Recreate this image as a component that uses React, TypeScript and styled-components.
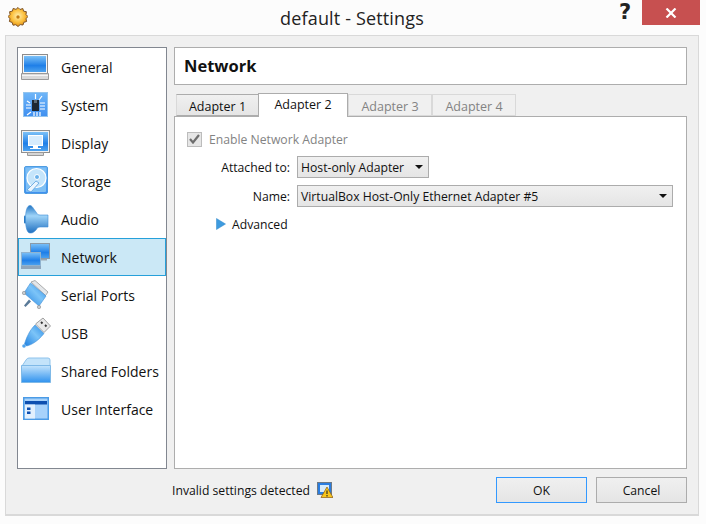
import React from "react";
import styled, { createGlobalStyle } from "styled-components";

const Global = createGlobalStyle`
  html, body { margin: 0; padding: 0; background: #fcfcfc; }
  body { font-family: "Open Sans", "Noto Sans", "Liberation Sans", sans-serif; font-size: 14px; color: #111; }
`;

const Window = styled.div`
  width: 706px; height: 524px; box-sizing: border-box; display: flex; flex-direction: column; overflow: hidden; background: #fcfcfc;
`;
const TitleBar = styled.header`
  height: 35px; flex: none; display: flex; align-items: flex-start; position: relative; box-sizing: border-box; padding-left: 8px;
`;
const AppIcon = styled.svg`
  width: 20px; height: 20px; margin-top: 7px; flex: none;
`;
const Title = styled.div`
  position: absolute; left: 0; right: 0; top: 6px; text-align: center; font-size: 18px; line-height: 24px; color: #222; letter-spacing: 0.15px; padding-right: 2px;
`;
const Help = styled.div`
  margin-left: auto; width: 20px; margin-top: 0; font: bold 21px/24px "DejaVu Sans", sans-serif; color: #222; text-align: center;
`;
const Close = styled.div`
  width: 58px; height: 25px; margin-left: 7px; margin-right: 6px; background: #c75050; display: flex; align-items: center; justify-content: center;
`;
const Body = styled.div`
  margin: 0 7px 0 5px; height: 481px; flex: none; box-sizing: border-box; background: #f0f0f0; border: 1px solid #d9d9d9; border-bottom: 2px solid #d9d9d9;
  padding: 11px 11px 0 11px; display: flex; flex-direction: column;
`;
const Main = styled.div`
  display: flex; gap: 7px; height: 422px; flex: none;
`;
const Sidebar = styled.nav`
  width: 150px; box-sizing: border-box; background: #fff; border: 1px solid #828790; flex: none;
  display: flex; flex-direction: column;
`;
const NavItem = styled.div<{ $active?: boolean }>`
  height: 38px; flex: none; box-sizing: border-box; display: flex; align-items: center; padding: 2px 0 0 3px; gap: 10px;
  background: ${p => (p.$active ? "#cbe8f6" : "transparent")};
  outline: ${p => (p.$active ? "1px solid #26a0da" : "none")};
  outline-offset: -1px;
  font-size: 14px; color: #111; line-height: 20px; white-space: nowrap;
`;
const NavIcon = styled.svg`
  width: 30px; height: 30px; flex: none; overflow: visible;
`;
const Content = styled.section`
  flex: 1; min-width: 0; display: flex; flex-direction: column;
`;
const Heading = styled.div`
  height: 38px; box-sizing: border-box; background: #fff; border: 1px solid #adadad; font-weight: 700; font-size: 16.5px; line-height: 36px; padding-left: 9px; color: #111; flex: none;
`;
const Tabs = styled.div`
  display: flex; height: 24px; margin-top: 7px; padding-left: 2px; position: relative; z-index: 1; align-items: flex-end; flex: none;
`;
const Tab = styled.div<{ $active?: boolean; $disabled?: boolean; $w: number }>`
  width: ${p => p.$w}px; box-sizing: border-box; text-align: center; font-size: 12.5px;
  height: ${p => (p.$active ? 24 : 22)}px;
  line-height: ${p => (p.$active ? 22 : 23)}px;
  margin-bottom: ${p => (p.$active ? -1 : 0)}px;
  background: ${p => (p.$active ? "#fff" : p.$disabled ? "#f0f0f0" : "linear-gradient(#f0f0f0,#e5e5e5)")};
  border: 1px solid ${p => (p.$disabled ? "#d9d9d9" : "#acacac")};
  border-bottom: ${p => (p.$active ? "none" : undefined)};
  border-left: ${p => (p.$active ? undefined : "1px solid #d9d9d9")};
  color: ${p => (p.$disabled ? "#838383" : "#111")};
  margin-left: ${p => (p.$active ? -1 : 0)}px;
`;
const Panel = styled.div`
  flex: 1; background: #fff; border: 1px solid #adadad; box-sizing: border-box; padding: 13px 13px 0 12px; display: flex; flex-direction: column;
`;
const CheckRow = styled.div`
  display: flex; align-items: center; gap: 7px; height: 18px; color: #838383; font-size: 12.2px;
`;
const CheckBox = styled.div`
  width: 15px; height: 15px; box-sizing: border-box; background: #e6e6e6; border: 1px solid #bcbcbc; display: flex; align-items: center; justify-content: center; flex: none;
`;
const FormRow = styled.div<{ $mt: number }>`
  display: flex; align-items: center; margin-top: ${p => p.$mt}px; height: 22px; gap: 7px;
`;
const Label = styled.div`
  width: 103px; text-align: right; font-size: 12.2px; flex: none; color: #111;
`;
const Select = styled.div<{ $w: number }>`
  width: ${p => p.$w}px; height: 22px; box-sizing: border-box; border: 1px solid #acacac; background: linear-gradient(#f0f0f0,#e5e5e5);
  display: flex; align-items: center; justify-content: space-between; padding: 0 5px 0 3px; font-size: 12.2px; color: #111; white-space: nowrap;
`;
const Arrow = styled.div`
  width: 0; height: 0; border-left: 4px solid transparent; border-right: 4px solid transparent; border-top: 4px solid #111;
`;
const AdvancedRow = styled.div`
  display: flex; align-items: center; margin-top: 6px; margin-left: 29px; height: 22px; gap: 6px; font-size: 12.2px; color: #111;
`;
const Footer = styled.footer`
  display: flex; align-items: center; height: 26px; margin-top: 8px; flex: none; padding-left: 155px;
`;
const Status = styled.div`
  font-size: 12.2px; color: #111; display: flex; align-items: center; gap: 7px; margin-right: auto; white-space: nowrap;
`;
const Button = styled.button<{ $primary?: boolean }>`
  width: 91px; height: 26px; box-sizing: border-box; margin-left: 9px; padding: 0; font: 12.2px "Open Sans", sans-serif; color: #111;
  border: 1px solid ${p => (p.$primary ? "#3399ff" : "#acacac")}; background: linear-gradient(#f0f0f0,#e5e5e5); border-radius: 0;
`;

const Defs = () => (
  <svg width="0" height="0" style={{ position: "absolute" }}>
    <defs>
      <linearGradient id="blue" x1="0" y1="0" x2="0" y2="1">
        <stop offset="0" stopColor="#7cc1f7" />
        <stop offset="0.6" stopColor="#1f7fe8" />
        <stop offset="1" stopColor="#4ea3ef" />
      </linearGradient>
      <linearGradient id="lite" x1="0" y1="0" x2="0" y2="1">
        <stop offset="0" stopColor="#c4e4fc" />
        <stop offset="1" stopColor="#2f92ee" />
      </linearGradient>
      <linearGradient id="sys" x1="0" y1="0" x2="0" y2="1">
        <stop offset="0" stopColor="#6fb6f8" />
        <stop offset="1" stopColor="#3f8ff0" />
      </linearGradient>
      <linearGradient id="diag" x1="0" y1="1" x2="1" y2="0">
        <stop offset="0" stopColor="#1f80e0" />
        <stop offset="0.55" stopColor="#7cc4f8" />
        <stop offset="1" stopColor="#2a8ce6" />
      </linearGradient>
      <linearGradient id="horn" x1="0" y1="0" x2="0" y2="1">
        <stop offset="0" stopColor="#2476c4" />
        <stop offset="0.38" stopColor="#9fd4f8" />
        <stop offset="1" stopColor="#1f6fc0" />
      </linearGradient>
      <radialGradient id="gold" cx="0.5" cy="0.45" r="0.6">
        <stop offset="0" stopColor="#fff0b0" />
        <stop offset="0.55" stopColor="#fbbf3c" />
        <stop offset="1" stopColor="#d9820c" />
      </radialGradient>
    </defs>
  </svg>
);

const icons: Record<string, React.ReactNode> = {
  General: (
    <>
      <rect x="1.5" y="1.5" width="25" height="19" fill="#f6f6f6" stroke="#8c8c8c" />
      <rect x="3" y="3" width="22" height="16" fill="url(#blue)" />
      <path d="M0.5 20.5 H27.5 V26.5 H0.5 Z" fill="#d9d9d9" stroke="#9a9a9a" />
      <path d="M1 22.5 H27" stroke="#f5f5f5" />
    </>
  ),
  System: (
    <>
      <rect x="2.5" y="1.5" width="24" height="24" fill="url(#sys)" stroke="#93c4ee" />
      <rect x="11" y="9" width="7" height="11" fill="#1d2731" />
      <rect x="13" y="9" width="3" height="3" fill="#5c6a74" />
      <path d="M14.5 3v5M21 5l-3 4M6 10l3 2M5 14h5M5 17h5M19 12h5M19 15h5M19 18h5M6 24l4-3M13 21v4M16 21v4M19 21v4" stroke="#fff" strokeWidth="1.2" />
    </>
  ),
  Display: (
    <>
      <rect x="0.5" y="1.5" width="28" height="22" fill="#f2f2f2" stroke="#8e8e8e" />
      <rect x="2" y="3" width="25" height="19" fill="url(#blue)" />
      <rect x="7.5" y="6.5" width="14" height="10" fill="#d7ecfd" stroke="#fff" />
      <path d="M12 17h5v2h-5z M9 19h11v1H9z" fill="#fff" />
      <path d="M6.5 23.5 H22.5 V26.5 H6.5 Z" fill="#d5d5d5" stroke="#9a9a9a" />
    </>
  ),
  Storage: (
    <>
      <rect x="3.5" y="-0.5" width="23" height="27" rx="1.5" fill="url(#sys)" stroke="#4f9de0" />
      <rect x="5" y="1" width="20" height="24" rx="1" fill="#7fc0f4" />
      <ellipse cx="15.5" cy="11" rx="9.5" ry="9.5" fill="#c5e5fb" stroke="#fff" strokeWidth="1.2" />
      <circle cx="16" cy="10" r="2.5" fill="#6ab1ea" stroke="#fff" />
      <path d="M6 23 L15 14 L18 16 L10 25 Z" fill="#eaf5fe" stroke="#5a9fdc" strokeWidth="0.8" />
    </>
  ),
  Audio: (
    <>
      <rect x="3" y="10.5" width="2" height="8" rx="1" fill="#2a7bc4" />
      <path d="M4.5 14 C4.5 6 6 0.5 9 0.5 C11 0.5 12 3 15 7 C16 9 17 10 19 10 H27 V22 H19 C17 22 16 23 15 25 C12 28 11 28 9 28 C6 28 4.5 22 4.5 14 Z" fill="url(#horn)" stroke="#3f8fd6" strokeWidth="0.6" />
    </>
  ),
  Network: (
    <>
      <rect x="9.5" y="0.5" width="19" height="15" fill="url(#blue)" stroke="#8a9aa8" />
      <path d="M18 16h8v1.5H18z" fill="#9aa6b0" />
      <rect x="0.5" y="9.5" width="19" height="13" fill="url(#blue)" stroke="#8fb3d0" />
      <path d="M0 23 H20 V26 H0Z" fill="#8fa6bb" />
    </>
  ),
  "Serial Ports": (
    <>
      <path d="M10 1 L14 -0.5 L27 11 L24.5 14.5 Z" fill="#e4e7ea" stroke="#8d8d8d" strokeWidth="0.7" />
      <path d="M3 24.5 L8 18.5 L10 20.5 L4.5 26 Z" fill="#5a7a98" />
      <path d="M9.5 2 L25 15 L18 25 L3 12 Z" fill="url(#diag)" stroke="#3f8fd6" strokeWidth="0.6" />
      <circle cx="3" cy="12" r="1.7" fill="#c8ccd0" stroke="#7d7d7d" strokeWidth="0.5" />
      <circle cx="18" cy="26" r="1.7" fill="#c8ccd0" stroke="#7d7d7d" strokeWidth="0.5" />
    </>
  ),
  USB: (
    <>
      <path d="M14 6 L23 14.5 C16 23 10 26 5.5 27 L3.5 25 C5 20 8 12 14 6 Z" fill="url(#diag)" stroke="#3f8fd6" strokeWidth="0.6" />
      <circle cx="3" cy="27" r="1.8" fill="#4fa3ec" />
      <path d="M14.5 5 L22 -1 L29.5 7 L23 13.5 Z" fill="#e8e8e8" stroke="#8a8a8a" strokeWidth="0.8" />
      <path d="M20 3l1.5 1.5M24 6l1.5 1.5" stroke="#333" strokeWidth="1.8" />
    </>
  ),
  "Shared Folders": (
    <>
      <path d="M5 3 Q6 1 8 1 H27 Q29 1 29 3 V25 H1 V9 Z" fill="#c3e3fa" stroke="#8ec3ec" />
      <path d="M0.5 8.5 H29.5 V25.5 H0.5 Z" fill="url(#lite)" stroke="#7fb9e7" />
    </>
  ),
  "User Interface": (
    <>
      <rect x="2.75" y="2.75" width="24.5" height="21.5" fill="#a7d2fb" stroke="#4b9be6" strokeWidth="1.5" />
      <rect x="4" y="6" width="22" height="3.5" fill="#0d4fb0" />
      <rect x="4" y="9.5" width="10" height="14" fill="#e2f0fd" />
      <rect x="6" y="12.5" width="3.5" height="2.5" fill="#0d4fb0" />
      <rect x="6" y="16.5" width="3.5" height="2.5" fill="#0d4fb0" />
    </>
  ),
};

const names = ["General", "System", "Display", "Storage", "Audio", "Network", "Serial Ports", "USB", "Shared Folders", "User Interface"];

export default function App() {
  return (
    <Window>
      <Global />
      <Defs />
      <TitleBar>
        <AppIcon viewBox="0 0 20 20">
          <path d="M10 .5l2 2 2.8-1 .8 2.7 2.8.5-.4 2.8 1.9 2-1.9 2.3.6 2.7-2.8.8-.8 2.7-2.8-.4-2.2 1.9-2.2-1.8-2.8.5-.9-2.8-2.7-.9.6-2.7-1.9-2.3 1.9-2-.4-2.8 2.8-.6.8-2.7 2.8 1z" fill="url(#gold)" stroke="#7d5428" strokeWidth="1" />
          <circle cx="10" cy="10" r="1.7" fill="#c07a12" />
        </AppIcon>
        <Title>default - Settings</Title>
        <Help>?</Help>
        <Close>
          <svg width="12" height="10" viewBox="0 0 12 10"><path d="M1.5 0.5 L10.5 9.5 M10.5 0.5 L1.5 9.5" stroke="#fff" strokeWidth="2.2" /></svg>
        </Close>
      </TitleBar>
      <Body>
        <Main>
          <Sidebar>
            {names.map(n => (
              <NavItem key={n} $active={n === "Network"}>
                <NavIcon viewBox="0 0 30 30">{icons[n]}</NavIcon>
                <span>{n}</span>
              </NavItem>
            ))}
          </Sidebar>
          <Content>
            <Heading>Network</Heading>
            <Tabs>
              <Tab $w={83}>Adapter 1</Tab>
              <Tab $active $w={90}>Adapter 2</Tab>
              <Tab $disabled $w={84}>Adapter 3</Tab>
              <Tab $disabled $w={84}>Adapter 4</Tab>
            </Tabs>
            <Panel>
              <CheckRow>
                <CheckBox>
                  <svg width="11" height="10" viewBox="0 0 11 10"><path d="M1 5 L4 8.5 L10 1" fill="none" stroke="#6e6e6e" strokeWidth="2.2" /></svg>
                </CheckBox>
                Enable Network Adapter
              </CheckRow>
              <FormRow $mt={8}>
                <Label>Attached to:</Label>
                <Select $w={132}>Host-only Adapter<Arrow /></Select>
              </FormRow>
              <FormRow $mt={7}>
                <Label>Name:</Label>
                <Select $w={376}>VirtualBox Host-Only Ethernet Adapter #5<Arrow /></Select>
              </FormRow>
              <AdvancedRow>
                <svg width="10" height="12" viewBox="0 0 10 12"><path d="M0.5 0.5 L9.5 6 L0.5 11.5 Z" fill="#3e9bdf" stroke="#2f86c8" strokeWidth="0.5" /></svg>
                Advanced
              </AdvancedRow>
            </Panel>
          </Content>
        </Main>
        <Footer>
          <Status>
            Invalid settings detected
            <svg width="16" height="16" viewBox="0 0 16 16">
              <rect x="0.5" y="0.5" width="14" height="12" fill="#2a7de0" stroke="#6e7a86" />
              <rect x="3" y="3" width="9" height="7" fill="#d6ebfc" />
              <path d="M10 5 L16 15.5 H4 Z" fill="#f8c51c" stroke="#8a5a10" strokeWidth="0.7" />
              <path d="M10 8.5v3.5M10 13v1.5" stroke="#222" strokeWidth="1.1" />
            </svg>
          </Status>
          <Button $primary>OK</Button>
          <Button>Cancel</Button>
        </Footer>
      </Body>
    </Window>
  );
}
